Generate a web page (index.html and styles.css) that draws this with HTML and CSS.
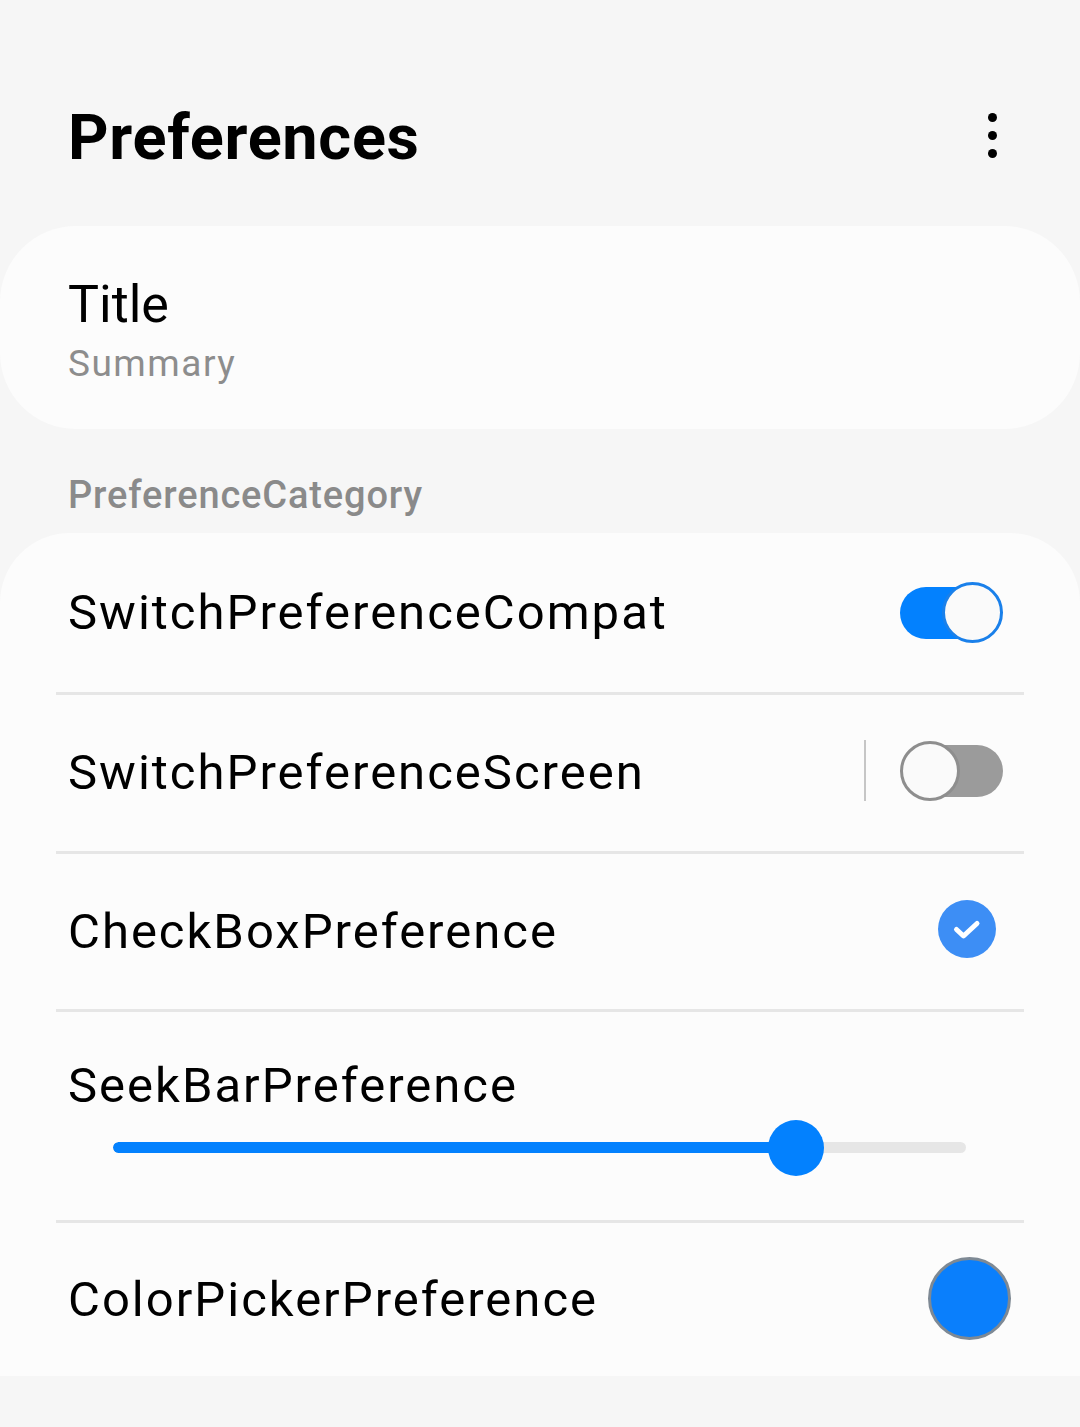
FILE: index.html
```html
<!DOCTYPE html>
<html>
<head>
<meta charset="utf-8">
<link rel="stylesheet" href="styles.css">
</head>
<body>
<header class="appbar">
  <h1 class="appbar-title">Preferences</h1>
  <div class="kebab"><span></span><span></span><span></span></div>
</header>

<section class="card card-single">
  <div class="pref-title">Title</div>
  <div class="pref-summary">Summary</div>
</section>

<div class="category">PreferenceCategory</div>

<section class="card card-group">
  <div class="row row-first">
    <div class="row-title">SwitchPreferenceCompat</div>
    <div class="switch switch-on"><div class="track"></div><div class="thumb"></div></div>
  </div>
  <div class="divider"></div>
  <div class="row">
    <div class="row-title">SwitchPreferenceScreen</div>
    <div class="vsep"></div>
    <div class="switch switch-off"><div class="track"></div><div class="thumb"></div></div>
  </div>
  <div class="divider"></div>
  <div class="row row-check">
    <div class="row-title">CheckBoxPreference</div>
    <div class="checkbox">
      <svg width="58" height="58" viewBox="0 0 58 58"><circle cx="29" cy="29" r="29" fill="#3d8ef5"/><path d="M18.5 29.5 L25.5 36 L39 23.5" fill="none" stroke="#ffffff" stroke-width="5" stroke-linecap="round" stroke-linejoin="round"/></svg>
    </div>
  </div>
  <div class="divider"></div>
  <div class="row row-seek">
    <div class="row-title">SeekBarPreference</div>
    <div class="seekbar">
      <div class="seek-track"><div class="seek-fill" style="width: 80.1%"></div></div>
      <div class="seek-thumb" style="left: 80.1%"></div>
    </div>
  </div>
  <div class="divider"></div>
  <div class="row row-last">
    <div class="row-title">ColorPickerPreference</div>
    <div class="color-swatch"></div>
  </div>
</section>
</body>
</html>
```

FILE: styles.css
```css
html, body {
  margin: 0;
  padding: 0;
}
body {
  background: #f6f6f6;
  font-family: Roboto, "Noto Sans", sans-serif;
  color: #000;
  width: 1080px;
  height: 1427px;
  overflow: hidden;
}
.appbar {
  height: 226px;
  display: flex;
  align-items: flex-start;
  justify-content: space-between;
  padding: 0 83px 0 68px;
  box-sizing: border-box;
}
.appbar-title {
  margin: 0;
  padding-top: 98px;
  font-size: 63px;
  font-weight: 700;
  line-height: 80px;
  letter-spacing: 0.7px;
}
.kebab {
  margin-top: 113px;
  display: flex;
  flex-direction: column;
  gap: 9px;
  align-items: center;
}
.kebab span {
  width: 9px;
  height: 9px;
  border-radius: 50%;
  background: #000;
}
.card {
  background: #fcfcfc;
}
.card-single {
  height: 203px;
  border-radius: 76px;
  padding: 0 68px;
  box-sizing: border-box;
  display: flex;
  flex-direction: column;
  justify-content: center;
}
.pref-title {
  font-size: 52px;
  line-height: 62px;
  margin-top: 8px;
}
.pref-summary {
  font-size: 37px;
  line-height: 50px;
  margin-top: 3px;
  letter-spacing: 1.5px;
  color: #8d8d8d;
}
.category {
  height: 104px;
  box-sizing: border-box;
  padding: 42px 68px 0;
  font-size: 38px;
  line-height: 48px;
  font-weight: 500;
  letter-spacing: 0.85px;
  color: #8a8a8a;
}
.card-group {
  border-radius: 70px 70px 0 0;
  height: 843px;
}
.row {
  height: 156px;
  display: flex;
  align-items: center;
  padding: 0 77px 0 68px;
  box-sizing: border-box;
}
.row-first { height: 159px; }
.row-check { height: 155px; }
.row-last { height: 154px; padding-right: 69px; }
.row-title {
  flex: 1;
  font-size: 49px;
  line-height: 60px;
  letter-spacing: 2px;
  white-space: nowrap;
}
.divider {
  height: 3px;
  margin: 0 56px;
  background: #e6e6e6;
}
.switch {
  position: relative;
  width: 103px;
  height: 62px;
}
.switch .track {
  position: absolute;
  top: 5px;
  height: 52px;
  border-radius: 26px;
}
.switch .thumb {
  position: absolute;
  top: 0;
  width: 61px;
  height: 61px;
  border-radius: 50%;
  box-sizing: border-box;
  background: #fafafa;
}
.switch-on .track {
  left: 0;
  width: 98px;
  background: #0381fe;
}
.switch-on .thumb {
  right: 0;
  border: 3px solid #1a80ea;
}
.switch-off {
  margin-bottom: 5px;
}
.switch-off .track {
  left: 2px;
  right: 0;
  background: #9b9b9b;
}
.switch-off .thumb {
  left: 0;
  width: 60px;
  height: 60px;
  top: 1px;
  border: 3px solid #8e8e8e;
}
.vsep {
  width: 2px;
  height: 61px;
  background: #c6c6c6;
  margin-right: 34px;
  margin-bottom: 5px;
}
.checkbox {
  width: 58px;
  height: 58px;
  margin-right: 7px;
  margin-bottom: 5px;
}
.checkbox svg { display: block; }
.row-seek {
  height: 208px;
  flex-direction: column;
  align-items: stretch;
  justify-content: flex-start;
  padding: 44px 114px 0 68px;
}
.row-seek .row-title {
  flex: none;
}
.seekbar {
  position: relative;
  height: 56px;
  margin: 4px 0 0 45px;
}
.seek-track {
  position: absolute;
  left: 0;
  right: 0;
  top: 22px;
  height: 11px;
  border-radius: 6px;
  background: #e6e6e6;
  overflow: hidden;
}
.seek-fill {
  height: 100%;
  background: #0381fe;
  border-radius: 6px;
}
.seek-thumb {
  position: absolute;
  top: 0;
  width: 56px;
  height: 56px;
  margin-left: -28px;
  border-radius: 50%;
  background: #0381fe;
}
.color-swatch {
  width: 83px;
  height: 83px;
  border-radius: 50%;
  box-sizing: border-box;
  border: 3px solid #7e8994;
  background: #0a7ffc;
  margin-bottom: 3px;
}
```
